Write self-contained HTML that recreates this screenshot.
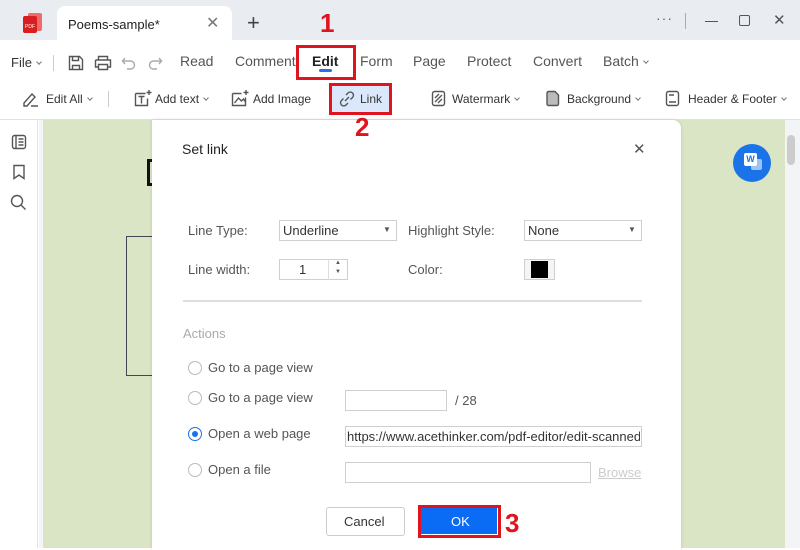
<!DOCTYPE html>
<html><head><style>
*{margin:0;padding:0;box-sizing:border-box}
body{width:800px;height:548px;overflow:hidden;position:relative;font-family:"Liberation Sans",sans-serif;background:#fff;color:#333}
.a{position:absolute}
.t{position:absolute;font-size:13px;color:#555;white-space:nowrap}
.d{position:absolute;font-size:13px;color:#333;white-space:nowrap}
.box{position:absolute;border:1px solid #cfcfcf;background:#fff}
.radio{position:absolute;width:14px;height:14px;border:1px solid #bbb;border-radius:50%;background:#fff}
.red{position:absolute;border:3px solid #e0141e}
.num{position:absolute;color:#e0141e;font-weight:bold;font-size:26px}
.cv{display:inline-block;width:4px;height:4px;border-right:1px solid #777;border-bottom:1px solid #777;transform:rotate(45deg);margin-left:5px;vertical-align:3px}
svg.i{position:absolute;fill:none;stroke:#555;stroke-width:1.4}
</style></head><body>
<div class="a" style="left:0;top:0;width:800px;height:40px;background:#e9ecf0"></div>
<div class="a" style="left:57px;top:6px;width:175px;height:36px;background:#fff;border-radius:8px 8px 0 0"></div>
<svg class="a" style="left:22px;top:12px" width="24" height="22"><rect x="6" y="1" width="14" height="18" rx="2" fill="#f06a6a"/><rect x="1" y="4" width="14" height="17" rx="2" fill="#d81e1e"/><text x="3" y="16" font-size="5" fill="#fff" font-family="Liberation Sans">PDF</text></svg>
<div class="d" style="left:68px;top:17px;font-size:13px;color:#222">Poems-sample*</div>
<div class="d" style="left:206px;top:13px;font-size:16px;color:#777">✕</div>
<div class="d" style="left:247px;top:10px;font-size:22px;color:#444">+</div>
<div class="d" style="left:656px;top:10px;font-size:14px;color:#666;letter-spacing:1px">···</div>
<div class="a" style="left:685px;top:13px;width:1px;height:16px;background:#aaa"></div>
<div class="a" style="left:705px;top:21px;width:13px;height:1px;background:#555"></div>
<div class="a" style="left:739px;top:15px;width:11px;height:11px;border:1.3px solid #555;border-radius:2px"></div>
<div class="d" style="left:773px;top:11px;font-size:15px;color:#555">✕</div>

<div class="t" style="left:11px;top:55px;color:#333">File<span class="cv"></span></div>
<div class="a" style="left:53px;top:55px;width:1px;height:16px;background:#ccc"></div>
<svg class="i" style="left:68px;top:55px" width="16" height="16"><path d="M1.5 1.5h10l3 3v10h-13z M4.5 1.5v4h6v-4 M4.5 14.5v-4h7v4"/></svg>
<svg class="i" style="left:94px;top:55px" width="18" height="16"><path d="M4.5 5V1.5h9V5 M1.5 5h15v7h-3 M4.5 12h-3V5 M4.5 9.5h9v5h-9z"/></svg>
<svg class="i" style="left:121px;top:55px;stroke:#aaa" width="16" height="16"><path d="M4 3L1.5 6 4 9 M1.5 6h8a4 4 0 010 8H6"/></svg>
<svg class="i" style="left:147px;top:55px;stroke:#aaa" width="16" height="16"><path d="M12 3l2.5 3L12 9 M14.5 6h-8a4 4 0 000 8H10"/></svg>
<div class="t" style="left:180px;top:53px;font-size:14px">Read</div>
<div class="t" style="left:235px;top:53px;font-size:14px">Comment</div>
<div class="d" style="left:312px;top:53px;font-size:14px;font-weight:bold;color:#222">Edit</div>
<div class="a" style="left:319px;top:69px;width:13px;height:3px;border-radius:2px;background:#2a6fe8"></div>
<div class="t" style="left:360px;top:53px;font-size:14px">Form</div>
<div class="t" style="left:413px;top:53px;font-size:14px">Page</div>
<div class="t" style="left:467px;top:53px;font-size:14px">Protect</div>
<div class="t" style="left:533px;top:53px;font-size:14px">Convert</div>
<div class="t" style="left:603px;top:53px;font-size:14px">Batch<span class="cv"></span></div>
<div class="red" style="left:296px;top:45px;width:60px;height:35px"></div>
<div class="num" style="left:320px;top:8px">1</div>

<div class="a" style="left:331px;top:85px;width:58px;height:28px;background:#dbe8fb"></div>
<svg class="i" style="left:22px;top:91px" width="18" height="16"><path d="M2 12l8-9 3 3-8 9H2z M9 15h7"/></svg>
<div class="t" style="left:46px;top:92px;color:#333;font-size:12px">Edit All<span class="cv"></span></div>
<div class="a" style="left:108px;top:91px;width:1px;height:16px;background:#ccc"></div>
<svg class="i" style="left:134px;top:89px" width="18" height="18"><path d="M1.5 4.5h10M1.5 4.5v12h12v-7 M4.5 7.5h6M7.5 7.5v7 M15 1v5M12.5 3.5h5"/></svg>
<div class="t" style="left:155px;top:92px;color:#333;font-size:12px">Add text<span class="cv"></span></div>
<svg class="i" style="left:231px;top:89px" width="18" height="18"><path d="M1.5 4.5h9M1.5 4.5v12h13v-8 M3.5 14l4-5 3 3 2-2 2 3 M15 1v5M12.5 3.5h5"/></svg>
<div class="t" style="left:253px;top:92px;color:#333;font-size:12px">Add Image</div>
<svg class="i" style="left:339px;top:91px" width="16" height="16"><path d="M7 4l2-2a3 3 0 014.5 4.5l-2 2 M9 12l-2 2a3 3 0 01-4.5-4.5l2-2 M6 10l4-4"/></svg>
<div class="t" style="left:360px;top:92px;color:#333;font-size:12px">Link</div>
<svg class="i" style="left:431px;top:90px" width="16" height="17"><rect x="1.5" y="1.5" width="12" height="14" rx="2"/><path d="M4 8l4-4M4 12l7-7M7 13l4-4"/></svg>
<div class="t" style="left:452px;top:92px;color:#333;font-size:12px">Watermark<span class="cv"></span></div>
<svg class="i" style="left:545px;top:90px" width="16" height="17"><path d="M2 3a1.5 1.5 0 011.5-1.5H10l3.5 3.5v9a1.5 1.5 0 01-1.5 1.5H3.5A1.5 1.5 0 012 14z" fill="#bbb"/></svg>
<div class="t" style="left:567px;top:92px;color:#333;font-size:12px">Background<span class="cv"></span></div>
<svg class="i" style="left:665px;top:90px" width="16" height="17"><rect x="1.5" y="1.5" width="12" height="14" rx="2"/><path d="M4 5h5M4 12h7"/></svg>
<div class="t" style="left:688px;top:92px;color:#333;font-size:12px">Header &amp; Footer<span class="cv"></span></div>
<div class="red" style="left:329px;top:83px;width:63px;height:32px"></div>

<div class="a" style="left:0;top:119px;width:800px;height:1px;background:#e2e2e2"></div>
<div class="a" style="left:0;top:120px;width:38px;height:428px;background:#fff;border-right:1px solid #e4e4e4"></div>
<div class="a" style="left:39px;top:120px;width:4px;height:428px;background:#f4f5f7"></div>
<div class="a" style="left:43px;top:120px;width:742px;height:428px;background:#dae5c6"></div>
<div class="a" style="left:785px;top:120px;width:15px;height:428px;background:#f3f4f6"></div>
<div class="a" style="left:787px;top:135px;width:8px;height:30px;background:#ccc;border-radius:4px"></div>
<svg class="i" style="left:11px;top:134px" width="16" height="16"><rect x="1.5" y="1.5" width="13" height="13" rx="2"/><path d="M5 1.5v13M7.5 5h5M7.5 8h5M7.5 11h5"/></svg>
<svg class="i" style="left:11px;top:164px" width="16" height="16"><path d="M3 1.5h10v13l-5-3.5-5 3.5z"/></svg>
<svg class="i" style="left:10px;top:194px" width="17" height="17"><circle cx="7" cy="7" r="5.5"/><path d="M11 11l4.5 4.5"/></svg>
<div class="a" style="left:147px;top:159px;width:6px;height:27px;border:3px solid #111;border-right:none"></div>
<div class="a" style="left:126px;top:236px;width:30px;height:140px;border:1.5px solid #445;border-right:none"></div>
<div class="a" style="left:733px;top:144px;width:38px;height:38px;border-radius:50%;background:#1a73e8"></div>
<div class="a" style="left:751px;top:159px;width:11px;height:11px;background:#9cc3f7;border-radius:2px"></div>
<div class="a" style="left:744px;top:153px;width:13px;height:13px;background:#fff;border-radius:2px;font-size:9px;font-weight:bold;color:#1a73e8;text-align:center;line-height:13px">W</div>

<div class="a" style="left:152px;top:120px;width:529px;height:430px;background:#fff;border-radius:0 8px 0 0;box-shadow:0 0 3px rgba(0,0,0,.15)"></div>
<div class="num" style="left:355px;top:112px">2</div>
<div class="d" style="left:182px;top:141px;font-size:14px;color:#222">Set link</div>
<div class="d" style="left:633px;top:140px;font-size:15px;color:#555">✕</div>
<div class="t" style="left:188px;top:223px">Line Type:</div>
<div class="box" style="left:279px;top:220px;width:118px;height:21px"></div>
<div class="d" style="left:283px;top:223px">Underline</div>
<div class="d" style="left:383px;top:225px;font-size:8px;color:#555">▼</div>
<div class="t" style="left:408px;top:223px">Highlight Style:</div>
<div class="box" style="left:524px;top:220px;width:118px;height:21px"></div>
<div class="d" style="left:528px;top:223px">None</div>
<div class="d" style="left:628px;top:225px;font-size:8px;color:#555">▼</div>
<div class="t" style="left:188px;top:262px">Line width:</div>
<div class="box" style="left:279px;top:259px;width:69px;height:21px"></div>
<div class="a" style="left:328px;top:259px;width:1px;height:21px;background:#ddd"></div>
<div class="d" style="left:299px;top:262px">1</div>
<div class="d" style="left:335px;top:259px;font-size:6px;color:#555;line-height:9px">▲<br>▼</div>
<div class="t" style="left:408px;top:262px">Color:</div>
<div class="box" style="left:524px;top:259px;width:31px;height:21px;background:#f5f5f5"></div>
<div class="a" style="left:531px;top:261px;width:17px;height:17px;background:#000"></div>
<div class="a" style="left:183px;top:300px;width:459px;height:2px;background:#ddd"></div>
<div class="t" style="left:183px;top:326px;color:#aaa">Actions</div>
<div class="radio" style="left:188px;top:361px"></div><div class="t" style="left:208px;top:360px">Go to a page view</div>
<div class="radio" style="left:188px;top:391px"></div><div class="t" style="left:208px;top:390px">Go to a page view</div>
<div class="box" style="left:345px;top:390px;width:102px;height:21px"></div>
<div class="t" style="left:455px;top:393px">/ 28</div>
<div class="radio" style="left:188px;top:427px;border-color:#1a73e8"></div>
<div class="a" style="left:192px;top:431px;width:6px;height:6px;border-radius:50%;background:#1a73e8"></div>
<div class="t" style="left:208px;top:426px">Open a web page</div>
<div class="box" style="left:345px;top:426px;width:297px;height:21px"></div>
<div class="d" style="left:347px;top:429px;width:293px;overflow:hidden">https://www.acethinker.com/pdf-editor/edit-scanned</div>
<div class="radio" style="left:188px;top:463px"></div><div class="t" style="left:208px;top:462px">Open a file</div>
<div class="box" style="left:345px;top:462px;width:246px;height:21px"></div>
<div class="t" style="left:598px;top:465px;color:#ccc;text-decoration:underline">Browse</div>
<div class="a" style="left:326px;top:507px;width:79px;height:29px;border:1px solid #ccc;border-radius:3px;background:#fff"></div>
<div class="d" style="left:344px;top:514px">Cancel</div>
<div class="a" style="left:421px;top:508px;width:76px;height:26px;background:#0a6cf5"></div>
<div class="d" style="left:451px;top:514px;color:#fff">OK</div>
<div class="red" style="left:418px;top:505px;width:83px;height:33px"></div>
<div class="num" style="left:505px;top:508px">3</div>
</body></html>
